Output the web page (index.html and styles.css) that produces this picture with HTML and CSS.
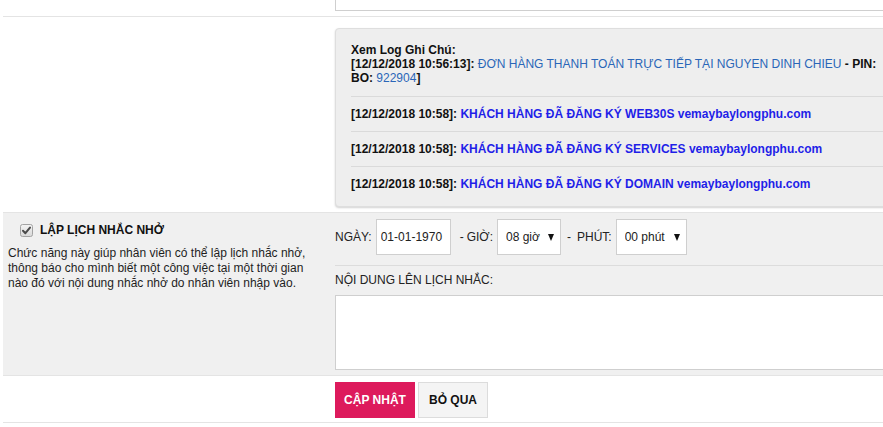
FILE: index.html
```html
<!DOCTYPE html>
<html lang="vi">
<head>
<meta charset="utf-8">
<title>Lập lịch nhắc nhở</title>
<link rel="stylesheet" href="styles.css">
</head>
<body>
<div class="form">
  <div class="row row-top">
    <div class="cell-left"></div>
    <div class="cell-right"><div class="prev-box"></div></div>
  </div>

  <div class="row row-log">
    <div class="cell-left"></div>
    <div class="cell-right">
      <div class="log-box">
        <div class="log-item">
          <div class="log-title">Xem Log Ghi Chú:</div>
          <span class="ts">[12/12/2018 10:56:13]:</span> <span class="msg-a">ĐƠN HÀNG THANH TOÁN TRỰC TIẾP TẠI NGUYEN DINH CHIEU</span> <span class="ts">- PIN: BO:</span> <span class="msg-a">922904</span><span class="ts">]</span>
        </div>
        <div class="log-item">
          <span class="ts">[12/12/2018 10:58]:</span> <span class="msg-b">KHÁCH HÀNG ĐÃ ĐĂNG KÝ WEB30S vemaybaylongphu.com</span>
        </div>
        <div class="log-item">
          <span class="ts">[12/12/2018 10:58]:</span> <span class="msg-b">KHÁCH HÀNG ĐÃ ĐĂNG KÝ SERVICES vemaybaylongphu.com</span>
        </div>
        <div class="log-item">
          <span class="ts">[12/12/2018 10:58]:</span> <span class="msg-b">KHÁCH HÀNG ĐÃ ĐĂNG KÝ DOMAIN vemaybaylongphu.com</span>
        </div>
      </div>
    </div>
  </div>

  <div class="row row-reminder">
    <div class="cell-left">
      <div class="reminder-head">
        <svg class="chk" width="13" height="13" viewBox="0 0 13 13" aria-hidden="true">
          <defs>
            <linearGradient id="cg" x1="0" y1="0" x2="0" y2="1">
              <stop offset="0" stop-color="#f4f4f4"/>
              <stop offset="1" stop-color="#d8d8d8"/>
            </linearGradient>
          </defs>
          <rect x="0.5" y="0.5" width="12" height="12" rx="2" fill="url(#cg)" stroke="#a3a3a3"/>
          <path d="M3 6.8 L5.4 9.2 L10 3.6" fill="none" stroke="#4a4a4a" stroke-width="2" stroke-linecap="round" stroke-linejoin="round"/>
        </svg>
        <span class="head-text">LẬP LỊCH NHẮC NHỞ</span>
      </div>
      <p class="desc">Chức năng này giúp nhân viên có thể lập lịch nhắc nhở, thông báo cho mình biết một công việc tại một thời gian nào đó với nội dung nhắc nhở do nhân viên nhập vào.</p>
    </div>
    <div class="cell-right">
      <div class="datetime">
        <span class="lbl">NGÀY:</span>
        <input class="date" type="text" value="01-01-1970">
        <span class="dash dash-1">-</span>
        <span class="lbl">GIỜ:</span>
        <span class="sel sel-hour"><select><option>08 giờ</option></select></span>
        <span class="dash dash-2">-</span>
        <span class="lbl lbl-min">PHÚT:</span>
        <span class="sel sel-min"><select><option>00 phút</option></select></span>
      </div>
      <div class="sep"></div>
      <div class="content-label">NỘI DUNG LÊN LỊCH NHẮC:</div>
      <textarea class="content"></textarea>
    </div>
  </div>

  <div class="row row-actions">
    <div class="cell-left"></div>
    <div class="cell-right">
      <div class="actions">
        <button class="btn btn-primary" type="button">CẬP NHẬT</button>
        <button class="btn btn-default" type="button">BỎ QUA</button>
      </div>
    </div>
  </div>
</div>
</body>
</html>
```
FILE: styles.css
```css
html, body {
  margin: 0;
  padding: 0;
  background: #fff;
  overflow: hidden;
}
body {
  font-family: "Liberation Sans", Arial, sans-serif;
  font-size: 12px;
  color: #222;
}
.form {
  margin-left: 3px;
  width: 905px;
}
.row {
  display: grid;
  grid-template-columns: 320px 1fr;
  border-bottom: 1px solid #e4e4e4;
}
.cell-right {
  padding-left: 12px;
  min-width: 0;
}

/* row 1 */
.row-top .cell-right {
  padding-bottom: 5px;
}
.prev-box {
  height: 10px;
  background: #fff;
  border: 1px solid #cfcfcf;
  border-top: none;
}

/* row 2 : log */
.row-log .cell-right {
  padding-top: 11px;
  padding-bottom: 5px;
}
.log-box {
  background: #eeeeee;
  border: 1px solid #dedede;
  border-radius: 4px;
  box-shadow: 0 1px 2px rgba(0,0,0,0.18);
  padding: 4px 15px 5px 15px;
  font-weight: bold;
  line-height: 14px;
  color: #111;
}
.log-item {
  padding: 10px 0;
}
.log-item:first-child {
  padding-bottom: 11px;
}
.log-item + .log-item {
  border-top: 1px solid #dadada;
}
.log-title {
  color: #111;
}
.ts {
  color: #111;
}
.msg-a {
  color: #2a66b8;
  font-weight: normal;
}
.msg-b {
  color: #1f1fe8;
}

/* row 3 : reminder */
.row-reminder {
  background: #f0f0f0;
}
.row-reminder .cell-left {
  padding-left: 5px;
  padding-top: 10px;
}
.reminder-head {
  display: flex;
  align-items: center;
  padding-left: 12px;
  line-height: 15px;
}
.chk {
  display: block;
  margin-right: 7px;
}
.head-text {
  font-weight: bold;
  color: #111;
}
.desc {
  margin: 8px 0 0 0;
  line-height: 15px;
  color: #1e1e1e;
}
.row-reminder .cell-right {
  padding-top: 6px;
  padding-bottom: 5px;
}
.datetime {
  display: flex;
  align-items: center;
  height: 36px;
}
.lbl {
  margin-right: 4px;
  color: #222;
}
.lbl-min {
  margin-right: 4px;
}
.dash {
  color: #222;
}
.dash-1 {
  margin: 0 3px 0 9px;
}
.dash-2 {
  margin: 0 6px 0 6px;
}
.date {
  box-sizing: border-box;
  width: 75px;
  height: 36px;
  margin: 0;
  padding: 0 4px;
  border: 1px solid #cfcfcf;
  background: #fff;
  font-family: inherit;
  font-size: 12px;
  color: #222;
  outline: none;
}
.sel {
  position: relative;
  display: block;
}
.sel select {
  -webkit-appearance: none;
  appearance: none;
  box-sizing: border-box;
  height: 36px;
  margin: 0;
  padding: 0 0 0 8px;
  border: 1px solid #cfcfcf;
  border-radius: 0;
  background: #fff;
  font-family: inherit;
  font-size: 12px;
  color: #222;
  display: block;
}
.sel-hour select { width: 64px; }
.sel-min select { width: 71px; }
.sel::after {
  content: "";
  position: absolute;
  right: 7px;
  top: 15px;
  width: 0;
  height: 0;
  border-left: 3.5px solid transparent;
  border-right: 3.5px solid transparent;
  border-top: 7px solid #111;
  pointer-events: none;
}
.sep {
  height: 1px;
  background: #dcdcdc;
  margin-top: 10px;
}
.content-label {
  margin-top: 7px;
  line-height: 15px;
  color: #222;
}
.content {
  display: block;
  box-sizing: border-box;
  width: 100%;
  height: 75px;
  margin: 7px 0 0 0;
  padding: 4px;
  border: 1px solid #cfcfcf;
  background: #fff;
  resize: none;
  font-family: inherit;
  font-size: 12px;
}

/* row 4 : actions */
.row-actions .cell-right {
  padding-top: 6px;
  padding-bottom: 4px;
}
.actions {
  display: flex;
  gap: 3px;
}
.btn {
  box-sizing: border-box;
  height: 36px;
  margin: 0;
  padding: 0;
  font-family: inherit;
  font-size: 12px;
  font-weight: bold;
  border-radius: 0;
  cursor: pointer;
}
.btn-primary {
  width: 80px;
  background: #dd1a5c;
  border: 1px solid #dd1a5c;
  color: #fff;
}
.btn-default {
  width: 70px;
  background: #f4f4f4;
  border: 1px solid #dcdcdc;
  color: #111;
}
```
